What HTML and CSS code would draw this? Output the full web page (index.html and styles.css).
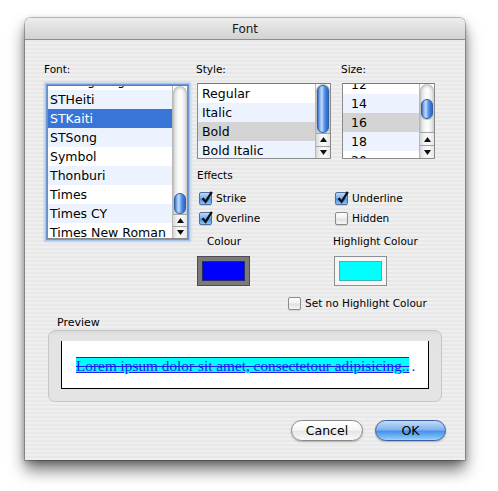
FILE: index.html
```html
<!DOCTYPE html>
<html>
<head>
<meta charset="utf-8">
<title>Font</title>
<link rel="stylesheet" href="styles.css">
</head>
<body>
<div class="window">
  <div class="titlebar">Font</div>
  <div class="content">
    <div class="main">
      <div class="col font-col">
        <div class="label">Font:</div>
        <div class="list font-list focus">
          <div class="items">
            <div class="row first-font">STFangsong</div>
            <div class="row alt">STHeiti</div>
            <div class="row sel">STKaiti</div>
            <div class="row alt">STSong</div>
            <div class="row">Symbol</div>
            <div class="row alt">Thonburi</div>
            <div class="row">Times</div>
            <div class="row alt">Times CY</div>
            <div class="row">Times New Roman</div>
          </div>
          <div class="scroller">
            <div class="track"><div class="knob knob-font"></div></div>
            <div class="arrow up"><svg width="7" height="5" viewBox="0 0 7 5"><polygon points="0,5 3.5,0 7,5" fill="#111"/></svg></div>
            <div class="arrow down"><svg width="7" height="5" viewBox="0 0 7 5"><polygon points="0,0 3.5,5 7,0" fill="#111"/></svg></div>
          </div>
        </div>
      </div>
      <div class="right">
        <div class="lists">
          <div class="col style-col">
            <div class="label">Style:</div>
            <div class="list short-list">
              <div class="items">
                <div class="row">Regular</div>
                <div class="row alt">Italic</div>
                <div class="row gray">Bold</div>
                <div class="row alt">Bold Italic</div>
              </div>
              <div class="scroller">
                <div class="track"><div class="knob knob-style"></div></div>
                <div class="arrow up"><svg width="7" height="5" viewBox="0 0 7 5"><polygon points="0,5 3.5,0 7,5" fill="#111"/></svg></div>
                <div class="arrow down"><svg width="7" height="5" viewBox="0 0 7 5"><polygon points="0,0 3.5,5 7,0" fill="#111"/></svg></div>
              </div>
            </div>
          </div>
          <div class="col size-col">
            <div class="label">Size:</div>
            <div class="list short-list size-list">
              <div class="items">
                <div class="row first-size">12</div>
                <div class="row alt">14</div>
                <div class="row gray">16</div>
                <div class="row alt">18</div>
                <div class="row">20</div>
              </div>
              <div class="scroller">
                <div class="track"><div class="knob knob-size"></div></div>
                <div class="arrow up"><svg width="7" height="5" viewBox="0 0 7 5"><polygon points="0,5 3.5,0 7,5" fill="#111"/></svg></div>
                <div class="arrow down"><svg width="7" height="5" viewBox="0 0 7 5"><polygon points="0,0 3.5,5 7,0" fill="#111"/></svg></div>
              </div>
            </div>
          </div>
        </div>

        <div class="label effects">Effects</div>
        <div class="checks">
          <div class="check"><span class="box on"><svg class="tick" width="14" height="14" viewBox="0 0 14 14"><path d="M2.5 7.2 L5.6 10.8 L11.8 0.8" fill="none" stroke="#111" stroke-width="2.3"/></svg></span><span class="clabel">Strike</span></div>
          <div class="check"><span class="box on"><svg class="tick" width="14" height="14" viewBox="0 0 14 14"><path d="M2.5 7.2 L5.6 10.8 L11.8 0.8" fill="none" stroke="#111" stroke-width="2.3"/></svg></span><span class="clabel">Underline</span></div>
          <div class="check"><span class="box on"><svg class="tick" width="14" height="14" viewBox="0 0 14 14"><path d="M2.5 7.2 L5.6 10.8 L11.8 0.8" fill="none" stroke="#111" stroke-width="2.3"/></svg></span><span class="clabel">Overline</span></div>
          <div class="check"><span class="box"></span><span class="clabel">Hidden</span></div>
        </div>

        <div class="colours">
          <div class="label colour-label">Colour</div>
          <div class="label hl-label">Highlight Colour</div>
          <div class="well dark"><div class="swatch blue"></div></div>
          <div class="well light"><div class="swatch cyan"></div></div>
        </div>

        <div class="check nohl"><span class="box"></span><span class="clabel">Set no Highlight Colour</span></div>
      </div>
    </div>

    <div class="label preview-label">Preview</div>
    <div class="preview-box">
      <div class="preview-inner">
        <span class="sample">Lorem ipsum dolor sit amet, consectetour adipisicing..</span><span class="dots">.</span>
      </div>
    </div>

    <div class="buttons">
      <div class="btn cancel">Cancel</div>
      <div class="btn ok">OK</div>
    </div>
  </div>
</div>
</body>
</html>
```

FILE: styles.css
```css
* { box-sizing: border-box; }

html, body {
  margin: 0;
  padding: 0;
  background: #ffffff;
}

body {
  width: 498px;
  height: 491px;
  overflow: hidden;
  font-family: "DejaVu Sans", "Lucida Grande", sans-serif;
  color: #000;
}

.window {
  margin: 18px 0 0 25px;
  width: 440px;
  height: 442px;
  border-radius: 6px 6px 0 0;
  background: repeating-linear-gradient(to bottom, #efefef 0 2px, #e8e8e8 2px 4px);
  box-shadow: 0 0 0 1px rgba(0, 0, 0, 0.22), 0 10px 16px rgba(0, 0, 0, 0.55), 0 2px 6px rgba(0, 0, 0, 0.25);
  display: flex;
  flex-direction: column;
}

.titlebar {
  height: 22px;
  border-radius: 6px 6px 0 0;
  border-bottom: 1px solid #8e8e8e;
  background: linear-gradient(to bottom, #ededed, #d2d2d2);
  text-align: center;
  font-size: 12px;
  line-height: 21px;
  padding-top: 1px;
  color: #1a1a1a;
}

.content {
  flex: 1;
  padding: 23px 21px 19px 20px;
  display: flex;
  flex-direction: column;
}

.main {
  display: flex;
  gap: 7px;
}

.label {
  font-size: 10.5px;
  line-height: 13px;
  height: 13px;
  white-space: nowrap;
}

.col {
  display: flex;
  flex-direction: column;
}

.col > .label {
  margin-bottom: 7px;
}

.font-col { width: 145px; }
.font-col > .label { margin-left: -1px; }

/* Lists */
.list {
  display: flex;
  background: #fff;
  border: 1px solid #8a8a8a;
  border-top-color: #7a7a7a;
}

.font-list {
  margin: 2px;
  height: 154px;
  box-shadow: 0 0 0 1px #6f98d6, 0 0 0 2px #a9c3ea, 0 0 2px 3px rgba(140, 175, 225, 0.45);
}

.short-list { height: 76px; }

.items {
  flex: 1;
  overflow: hidden;
  min-width: 0;
}

.row {
  height: 19px;
  line-height: 19px;
  font-size: 12.5px;
  padding-left: 2px;
  white-space: nowrap;
  background: #fff;
}

.short-list .row { padding-left: 4px; }
.size-list .row { padding-left: 8px; }

.row.alt { background: #edf3fe; }
.row.sel { background: #3875d7; color: #fff; }
.row.gray { background: #d4d4d4; }

.first-font { margin-top: -15px; }
.first-size { margin-top: -9px; }

/* Scrollers */
.scroller {
  width: 15px;
  display: flex;
  flex-direction: column;
  border-left: 1px solid #b8b8b8;
}

.track {
  flex: 1;
  display: flex;
  flex-direction: column;
  align-items: center;
  background: linear-gradient(to right, #c4c4c4 0, #e2e2e2 2px, #f7f7f7 5px, #fdfdfd 8px, #ececec 11px, #d2d2d2 14px);
  border-radius: 7px 7px 0 0;
  box-shadow: inset 0 3px 3px -1px rgba(0, 0, 0, 0.22);
}

.knob {
  width: 12px;
  border-radius: 6px;
  border: 1px solid #2f5ea8;
  background: linear-gradient(to right, #3c73c8 0, #7fb0ee 18%, #c7dcf8 38%, #6fa5ec 58%, #3a7fe0 78%, #3569bb 100%);
  box-shadow: 0 1px 1px rgba(0, 0, 0, 0.25);
}

.knob-font { margin-top: 107px; height: 21px; }
.knob-style { margin-top: 1px; height: 48px; }
.knob-size { margin-top: 15px; height: 20px; }

.arrow {
  height: 13px;
  display: flex;
  align-items: center;
  justify-content: center;
  border-top: 1px solid #a4a4a4;
  background: linear-gradient(to right, #d6d6d6 0, #f2f2f2 4px, #fbfbfb 8px, #e6e6e6 14px);
}

.arrow svg { display: block; }

/* Right side */
.right {
  width: 238px;
  display: flex;
  flex-direction: column;
}

.lists {
  display: flex;
  gap: 11px;
}

.style-col { width: 134px; }
.style-col > .label { margin-left: -1px; }
.size-col { width: 93px; }
.size-col > .label { margin-left: -1px; }

.effects { margin-top: 10px; }

.checks {
  margin-top: 6px;
  padding-left: 2px;
  display: grid;
  grid-template-columns: 136px auto;
}

.check {
  height: 20px;
  display: flex;
  align-items: center;
  gap: 4px;
}

.clabel {
  font-size: 10.5px;
  white-space: nowrap;
}

.box {
  position: relative;
  width: 13px;
  height: 13px;
  border-radius: 2px;
  border: 1px solid #8b8b8b;
  background: linear-gradient(to bottom, #ffffff 0, #f1f1f1 45%, #e0e0e0 55%, #f6f6f6 100%);
  box-shadow: 0 1px 1px rgba(0, 0, 0, 0.12);
  flex: none;
}

.box.on {
  border-color: #4d6e9f;
  background: linear-gradient(to bottom, #c3dbf6 0, #7fb0ea 45%, #4e8fe2 55%, #8cc6f7 100%);
}

.tick {
  position: absolute;
  left: 0;
  top: -2px;
}

.colours {
  margin-top: 7px;
  display: grid;
  grid-template-columns: 137px auto;
  row-gap: 8px;
}

.colour-label { margin-left: 10px; }
.hl-label { margin-left: -1px; }

.well {
  width: 53px;
  height: 30px;
  padding: 4px;
}

.well.dark {
  border: 1px solid #4e4e4e;
  background: #7a7a7a;
}

.well.light {
  border: 1px solid #8e8e8e;
  background: #f6f6f6;
}

.swatch {
  width: 100%;
  height: 100%;
}

.swatch.blue {
  background: #0000ff;
  border: 1px solid #2a2a6a;
}

.swatch.cyan {
  background: #00ffff;
  border: 1px solid #3fb5b5;
}

.nohl {
  margin-top: 7px;
  margin-left: 91px;
}

/* Preview */
.preview-label {
  margin-top: 3px;
  margin-left: 12px;
  font-size: 11px;
}

.preview-box {
  margin-top: 1px;
  margin-left: 3px;
  width: 394px;
  height: 72px;
  border-radius: 7px;
  border: 1px solid #c6c6c6;
  background: linear-gradient(to bottom, #d9d9d9 0, #e3e3e3 4px, #e4e4e4 100%);
  padding: 10px 12px 12px 12px;
}

.preview-inner {
  height: 48px;
  background: #fff;
  border: 1px solid #000;
  border-top: none;
  padding: 16px 0 0 14px;
  white-space: nowrap;
  overflow: hidden;
  font-family: "Liberation Serif", "Times New Roman", serif;
  font-size: 15.3px;
  color: #1f1fee;
}

.sample, .dots {
  display: inline-block;
  vertical-align: top;
  height: 16px;
  line-height: 15px;
  border-top: 1px solid #1f1fee;
  text-decoration: underline line-through;
  text-decoration-color: #1f1fee;
}

.sample {
  background: #00ffff;
  letter-spacing: 0;
}

.dots {
  border-top-color: transparent;
  text-decoration: none;
  padding-left: 2px;
}

/* Buttons */
.buttons {
  margin-top: 18px;
  margin-right: -2px;
  display: flex;
  justify-content: flex-end;
  gap: 12px;
}

.btn {
  height: 21px;
  border-radius: 10.5px;
  font-size: 12.5px;
  line-height: 19px;
  text-align: center;
  box-shadow: 0 1px 2px rgba(0, 0, 0, 0.25);
}

.cancel {
  width: 72px;
  border: 1px solid #8a8a8a;
  background: linear-gradient(to bottom, #ffffff 0, #f6f6f6 45%, #e6e6e6 55%, #f9f9f9 100%);
}

.ok {
  width: 71px;
  border: 1px solid #3d5d9e;
  background: linear-gradient(to bottom, #c4dcf8 0, #7fb4ef 45%, #4a92ea 55%, #7fc2f8 90%, #a8d8fb 100%);
}
```
